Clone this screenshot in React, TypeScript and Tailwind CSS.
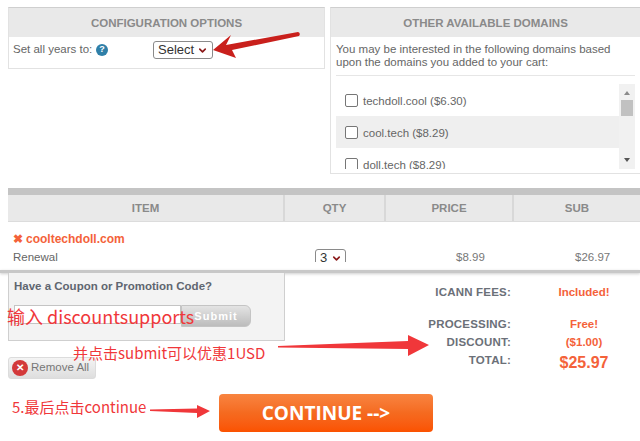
import { ChevronDown } from "lucide-react";

const sans = "font-['Liberation_Sans',Arial,sans-serif]";
const note = "font-['Noto_Sans_CJK_SC','Noto_Sans',sans-serif] text-[#f0373a]";

function FakeSelect({ label, className }: { label: string; className: string }) {
  return (
    <div className={`flex items-center border border-[#8a8a8a] rounded-[3px] bg-white text-[#333] ${className}`}>
      <span>{label}</span>
      <ChevronDown size={11} strokeWidth={3.5} className="text-[#8b1a1a] ml-auto" />
    </div>
  );
}

function DomainRow({ name, shaded }: { name: string; shaded?: boolean }) {
  return (
    <div className={`h-[32px] shrink-0 flex items-center pl-[9px] gap-[5px] ${shaded ? "bg-[#efefef]" : ""}`}>
      <span className="w-[13px] h-[13px] border border-[#767676] rounded-[2px] bg-white" />
      <span className="pt-[3px] text-[11.5px] text-[#666]">{name}</span>
    </div>
  );
}

function TotalRow({ label, value, h, big }: { label: string; value: string; h: string; big?: boolean }) {
  return (
    <div className={`flex items-center ${h}`}>
      <div className="w-[126px] text-right text-[11.5px] font-bold text-[#6b7078] tracking-[0.2px]">{label}</div>
      <div className={`w-[146px] text-center font-bold text-[#f4623a] ${big ? "text-[16px] pt-[3px]" : "text-[11.5px]"}`}>{value}</div>
    </div>
  );
}

export default function App() {
  return (
    <div className={`${sans} relative w-[640px] h-[441px] overflow-hidden bg-white pt-[7px]`}>
      {/* top panels */}
      <div className="flex items-start pl-[8px] gap-[5px] h-[167px]">
        <div className="w-[317px] h-[62px] border border-[#e2e2e2] border-t-[#cfcfcf]">
          <div className="h-[29px] pt-[2px] bg-[#e9e9e9] flex items-center justify-center text-[11.5px] font-bold text-[#8a8a8a]">
            CONFIGURATION OPTIONS
          </div>
          <div className="flex items-center h-[26px] pl-[4px] text-[11.5px] text-[#666]">
            <span className="w-[83px]">Set all years to:</span>
            <span className="w-[12px] h-[12px] rounded-full bg-[#2f7fa8] text-white text-[9px] font-bold flex items-center justify-center">?</span>
            <FakeSelect label="Select" className="ml-[45px] w-[60px] h-[18px] pl-[4px] pr-[4px] text-[13px]" />
          </div>
        </div>
        <div className="w-[310px] h-[167px] border border-[#e2e2e2] border-t-[#cfcfcf] border-r-0">
          <div className="h-[29px] pt-[2px] bg-[#e9e9e9] flex items-center justify-center text-[11.5px] font-bold text-[#8a8a8a]">
            OTHER AVAILABLE DOMAINS
          </div>
          <div className="px-[5px] pt-[3px]">
            <div className="h-[36px] border-b border-[#e6e6e6] text-[11.5px] leading-[13px] text-[#666] pt-[3px] whitespace-nowrap">
              You may be interested in the following domains based
              <br />
              upon the domains you added to your cart:
            </div>
            <div className="flex mt-[8px] h-[85px] w-[299px]">
              <div className="w-[283px] flex flex-col overflow-hidden">
                <DomainRow name="techdoll.cool ($6.30)" />
                <DomainRow name="cool.tech ($8.29)" shaded />
                <DomainRow name="doll.tech ($8.29)" />
              </div>
              <div className="w-[16px] bg-[#f1f1f1] flex flex-col items-center">
                <span className="mt-[7px] w-0 h-0 border-x-[3px] border-x-transparent border-b-[4px] border-b-[#8a8a8a]" />
                <span className="mt-[5px] w-[12px] h-[16px] bg-[#c1c1c1]" />
                <span className="mt-auto mb-[7px] w-0 h-0 border-x-[3px] border-x-transparent border-t-[4px] border-t-[#555]" />
              </div>
            </div>
          </div>
        </div>
      </div>

      {/* cart table */}
      <div className="ml-[8px] mt-[14px] h-[85px]">
        <div className="h-[7px] bg-[#c4c4c4]" />
        <div className="grid grid-cols-[275px_101px_128px_128px] h-[27px] bg-[#e9e9e9] border-b border-[#dcdcdc] text-[11.5px] font-bold text-[#8a8a8a]">
          <div className="pt-[2px] flex items-center justify-center">ITEM</div>
          <div className="pt-[2px] flex items-center justify-center border-l-2 border-[#d8d8d8]">QTY</div>
          <div className="pt-[2px] flex items-center justify-center border-l-2 border-[#d8d8d8]">PRICE</div>
          <div className="pt-[2px] flex items-center justify-center border-l-2 border-[#d8d8d8]">SUB</div>
        </div>
        <div className="h-[40px] overflow-hidden grid grid-cols-[275px_101px_128px_128px]">
          <div className="pl-[5px] pt-[10px]">
            <div className="flex items-center text-[12px] font-bold text-[#f4623a] h-[14px]">
              <span className="text-[12px] leading-none w-[13px]">✖</span>
              <span>cooltechdoll.com</span>
            </div>
            <div className="mt-[5px] text-[11.5px] leading-[13px] text-[#666]">Renewal</div>
          </div>
          <div className="pt-[27px] pl-[32px]">
            <FakeSelect label="3" className="w-[31px] h-[18px] pl-[4px] pr-[3px] text-[13px]" />
          </div>
          <div className="pt-[29px] pl-[72px] text-[11.5px] leading-[13px] text-[#777]">$8.99</div>
          <div className="pt-[29px] pl-[63px] text-[11.5px] leading-[13px] text-[#777]">$26.97</div>
        </div>
        <div className="h-[8px]" />
        <div className="h-[3px] -ml-[8px] bg-[#c8c8c8] shadow-[0_1px_3px_#ccc]" />
      </div>

      {/* coupon + totals */}
      <div className="flex pl-[8px]">
        <div className="w-[277px]">
          <div className="h-[68px] bg-[#f3f3f3] border border-[#cfcfcf] border-t-0 pl-[5px] pt-[6px]">
            <div className="text-[11.5px] leading-[15px] font-bold text-[#5f6670]">Have a Coupon or Promotion Code?</div>
            <div className="flex mt-[11px]">
              <div className="w-[167px] h-[19px] bg-white border border-[#c4c4c4]" />
              <div className="w-[70px] h-[22px] rounded-r-[6px] bg-gradient-to-b from-[#e4e4e4] to-[#bcbcbc] border border-[#c4c4c4] text-white text-[11px] font-bold tracking-[1px] flex items-center justify-center">
                Submit
              </div>
            </div>
          </div>
          <div className="mt-[16px] w-[88px] h-[22px] rounded-[3px] border border-[#dcdcdc] bg-gradient-to-b from-[#f4f4f4] to-[#dedede] flex items-center pl-[3px] gap-[3px] text-[11.5px] text-[#777] whitespace-nowrap">
            <span className="w-[16px] h-[16px] rounded-full bg-[#d3393a] text-white text-[10px] font-bold flex items-center justify-center leading-none shrink-0">✕</span>
            Remove All
          </div>
          <div className="mt-[15px] ml-[211px] w-[214px] h-[38px] rounded-[4px] bg-gradient-to-b from-[#f8843f] via-[#f56a1f] to-[#fb5200] text-white text-[19px] font-bold flex items-center justify-center font-['Open_Sans',sans-serif] whitespace-nowrap">
            CONTINUE --&gt;
          </div>
        </div>
        <div className="ml-[100px] pt-[11px] w-[272px]">
          <TotalRow label="ICANN FEES:" value="Included!" h="h-[17px]" />
          <div className="h-[15px]" />
          <TotalRow label="PROCESSING:" value="Free!" h="h-[18px]" />
          <TotalRow label="DISCOUNT:" value="($1.00)" h="h-[18px]" />
          <TotalRow label="TOTAL:" value="$25.97" h="h-[18px]" big />
        </div>
      </div>

      {/* hand-drawn annotations laid over the screenshot */}
      <svg className="absolute left-0 top-0 pointer-events-none" width="640" height="441" viewBox="0 0 640 441">
        <path d="M213 50 L231 35 L226 45 L298 32 Q301 33 299 36 L232 50 L236 58 Z" fill="#c9201c" />
        <path d="M278 346 L408 341 L408 335 L429 345 L408 356 L408 349 L278 347.5 Z" fill="#f0373a" />
        <path d="M150 409.5 L197 408.5 L197 405 L210 411 L197 418 L197 413 L150 411 Z" fill="#f0373a" />
      </svg>
      <div className={`${note} absolute left-[7px] top-[304px] text-[18px] leading-[24px] whitespace-nowrap`}>输入 discountsupports</div>
      <div className={`${note} absolute left-[73px] top-[343px] text-[15px] leading-[20px] whitespace-nowrap`}>并点击submit可以优惠1USD</div>
      <div className={`${note} absolute left-[12px] top-[397px] text-[15px] leading-[20px] whitespace-nowrap`}>5.最后点击continue</div>
    </div>
  );
}
